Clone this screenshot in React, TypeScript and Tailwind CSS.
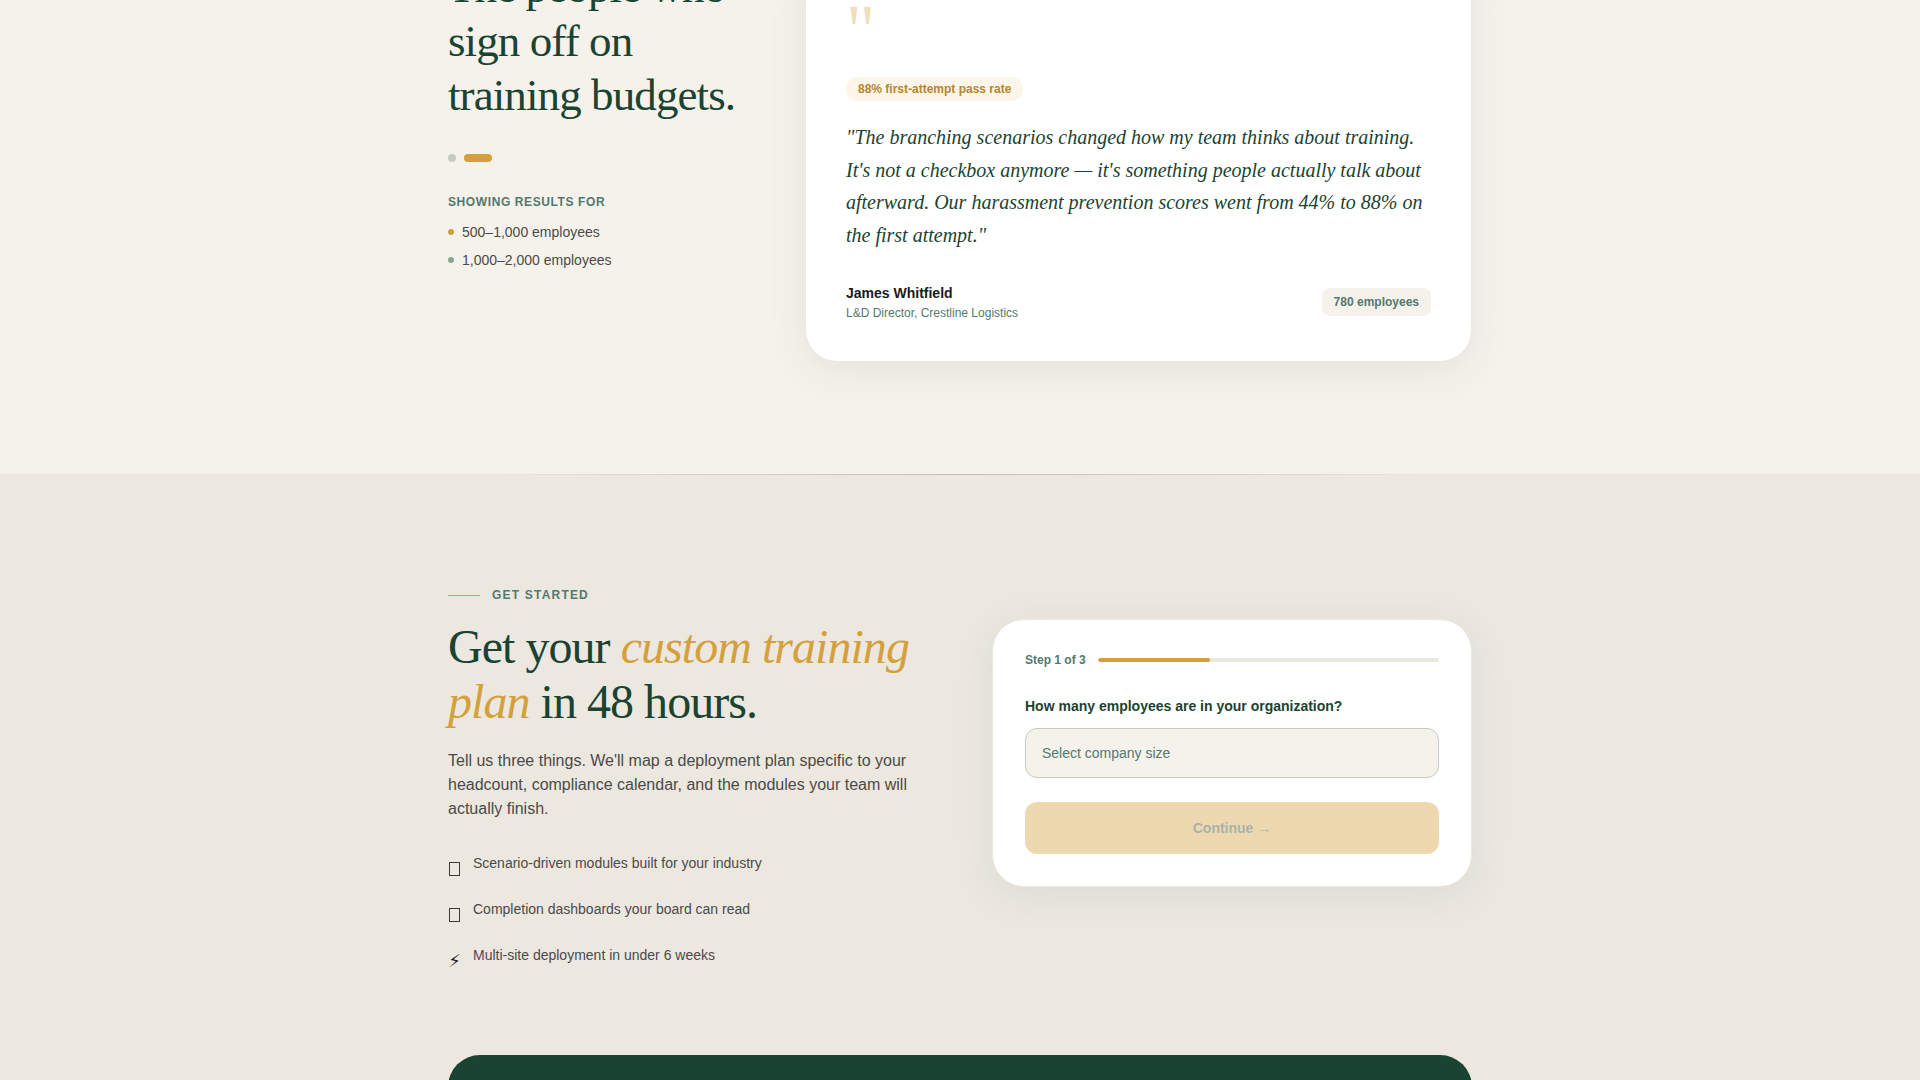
import { useState } from 'react';

const sizes = ['500–1,000 employees', '1,000–2,000 employees', '2,000+ employees'];

const audiences = [
  { label: '500–1,000 employees', dot: 'bg-[#d4a03c]' },
  { label: '1,000–2,000 employees', dot: 'bg-[#84a98c]' },
];

const benefits = [
  { icon: 'box', text: 'Scenario-driven modules built for your industry' },
  { icon: 'box', text: 'Completion dashboards your board can read' },
  { icon: 'bolt', text: 'Multi-site deployment in under 6 weeks' },
];

function Testimonial() {
  return (
    <figure className="flex-1 rounded-[32px] border border-[#ece8df] bg-white p-10 shadow-[0_8px_40px_rgba(27,67,50,0.08)]">
      <div aria-hidden="true" className="mb-3 font-['Liberation_Serif',serif] text-7xl leading-[68px] text-[#eee0bd]">
        "
      </div>
      <span className="inline-block rounded-full bg-[#fcf5ea] px-3 py-1 text-xs font-bold text-[#b8862b]">
        88% first-attempt pass rate
      </span>
      <blockquote className="mt-5 font-['Liberation_Serif',serif] text-xl leading-relaxed text-[#1b4332] italic">
        "The branching scenarios changed how my team thinks about training. It's not a checkbox anymore — it's
        something people actually talk about afterward. Our harassment prevention scores went from 44% to 88% on the
        first attempt."
      </blockquote>
      <figcaption className="mt-8 flex items-center justify-between">
        <div>
          <p className="text-sm font-bold text-[#1a1a1a]">James Whitfield</p>
          <p className="mt-0.5 text-xs text-[#52796f]">L&amp;D Director, Crestline Logistics</p>
        </div>
        <span className="rounded-lg bg-[#f5f2eb] px-3 py-1.5 text-xs font-bold text-[#52796f]">780 employees</span>
      </figcaption>
    </figure>
  );
}

function Results() {
  return (
    <section className="overflow-hidden bg-[#f5f2eb] pb-28">
      <div className="mx-auto -mt-[45px] flex max-w-5xl items-start gap-16">
        <div className="w-[293px] shrink-0 pt-[5px]">
          <h2 className="font-['Liberation_Serif',serif] text-[45px] leading-[54px] tracking-[-0.02em] text-[#1b4332]">
            The people who sign off on training budgets.
          </h2>
          <div className="mt-8 flex gap-2">
            <button type="button" aria-label="Testimonial 1" className="size-2 rounded-full bg-[#c4cdc2]" />
            <button type="button" aria-label="Testimonial 2" className="h-2 w-7 rounded-full bg-[#d4a03c]" />
          </div>
          <p className="mt-8 text-xs font-bold tracking-wider text-[#52796f] uppercase">Showing results for</p>
          <ul className="mt-3 space-y-2 text-sm text-[#4a4a4a]">
            {audiences.map((a) => (
              <li key={a.label} className="flex items-center gap-2">
                <span className={`size-1.5 rounded-full ${a.dot}`} />
                {a.label}
              </li>
            ))}
          </ul>
        </div>
        <Testimonial />
      </div>
    </section>
  );
}

function BenefitIcon({ icon }: { icon: string }) {
  return (
    <span aria-hidden="true" className="mt-1 flex h-6 w-[13px] items-center justify-center text-lg leading-6 text-[#1a1a1a]">
      {icon === 'bolt' ? (
        <span className="font-['DejaVu_Sans',sans-serif]">{'\u26A1\uFE0E'}</span>
      ) : (
        <span className="h-[14px] w-[11px] border border-[#3a3a3a]" />
      )}
    </span>
  );
}

function PlanForm() {
  const [size, setSize] = useState('');
  return (
    <form className="mt-8 self-start rounded-[32px] border border-[#ece8df] bg-white p-8 shadow-[0_8px_40px_rgba(27,67,50,0.08)]">
      <div className="mb-7 flex items-center gap-3">
        <span className="text-xs font-bold text-[#52796f]">Step 1 of 3</span>
        <div className="h-1 flex-1 overflow-hidden rounded-full bg-[#ece8df]">
          <div className="h-full w-[33%] rounded-full bg-[#d4a03c]" />
        </div>
      </div>
      <label htmlFor="company-size" className="mb-3 block text-sm font-bold text-[#1b4332]">
        How many employees are in your organization?
      </label>
      <select
        id="company-size"
        value={size}
        onChange={(e) => setSize(e.target.value)}
        className="block h-[50px] w-full appearance-none rounded-xl border border-[#c3cbc2] bg-[#f5f2eb] px-4 text-sm text-[#52796f] outline-none focus:border-[#d4a03c]"
      >
        <option value="">Select company size</option>
        {sizes.map((s) => (
          <option key={s} value={s}>
            {s}
          </option>
        ))}
      </select>
      <button
        type="button"
        disabled={!size}
        className="mt-6 w-full rounded-xl bg-[#d4a03c] py-4 text-sm font-bold text-[#1b4332] disabled:opacity-40"
      >
        Continue →
      </button>
    </form>
  );
}

function GetStarted() {
  return (
    <section className="bg-[#ece8e0]">
      <div className="mx-auto h-px max-w-5xl bg-linear-to-r from-transparent via-[#bcc0b5] to-transparent" />
      <div className="mx-auto max-w-5xl pt-28">
        <div className="grid grid-cols-2 gap-16">
          <div>
            <p className="mb-4 flex items-center gap-3 text-xs font-bold tracking-widest text-[#52796f] uppercase">
              <span className="h-px w-8 bg-[#d4a03c]" />
              Get started
            </p>
            <h2 className="mb-5 font-['Liberation_Serif',serif] text-5xl leading-[55px] tracking-[-0.02em] text-[#1b4332]">
              Get your <em className="text-[#d4a03c]">custom training plan</em> in 48 hours.
            </h2>
            <p className="mb-8 text-base text-[#4a4a4a]">
              Tell us three things. We'll map a deployment plan specific to your headcount, compliance calendar, and the
              modules your team will actually finish.
            </p>
            <ul className="space-y-4">
              {benefits.map((b) => (
                <li key={b.text} className="flex min-h-[30px] items-start gap-3">
                  <BenefitIcon icon={b.icon} />
                  <span className="text-sm text-[#4a4a4a]">{b.text}</span>
                </li>
              ))}
            </ul>
          </div>
          <PlanForm />
        </div>
        <div className="mt-20 rounded-[32px] bg-[#1b4332] py-20" />
      </div>
    </section>
  );
}

export default function App() {
  return (
    <main className="h-screen overflow-hidden bg-[#ece8e0] font-['Liberation_Sans',Arial,sans-serif]">
      <Results />
      <GetStarted />
    </main>
  );
}
